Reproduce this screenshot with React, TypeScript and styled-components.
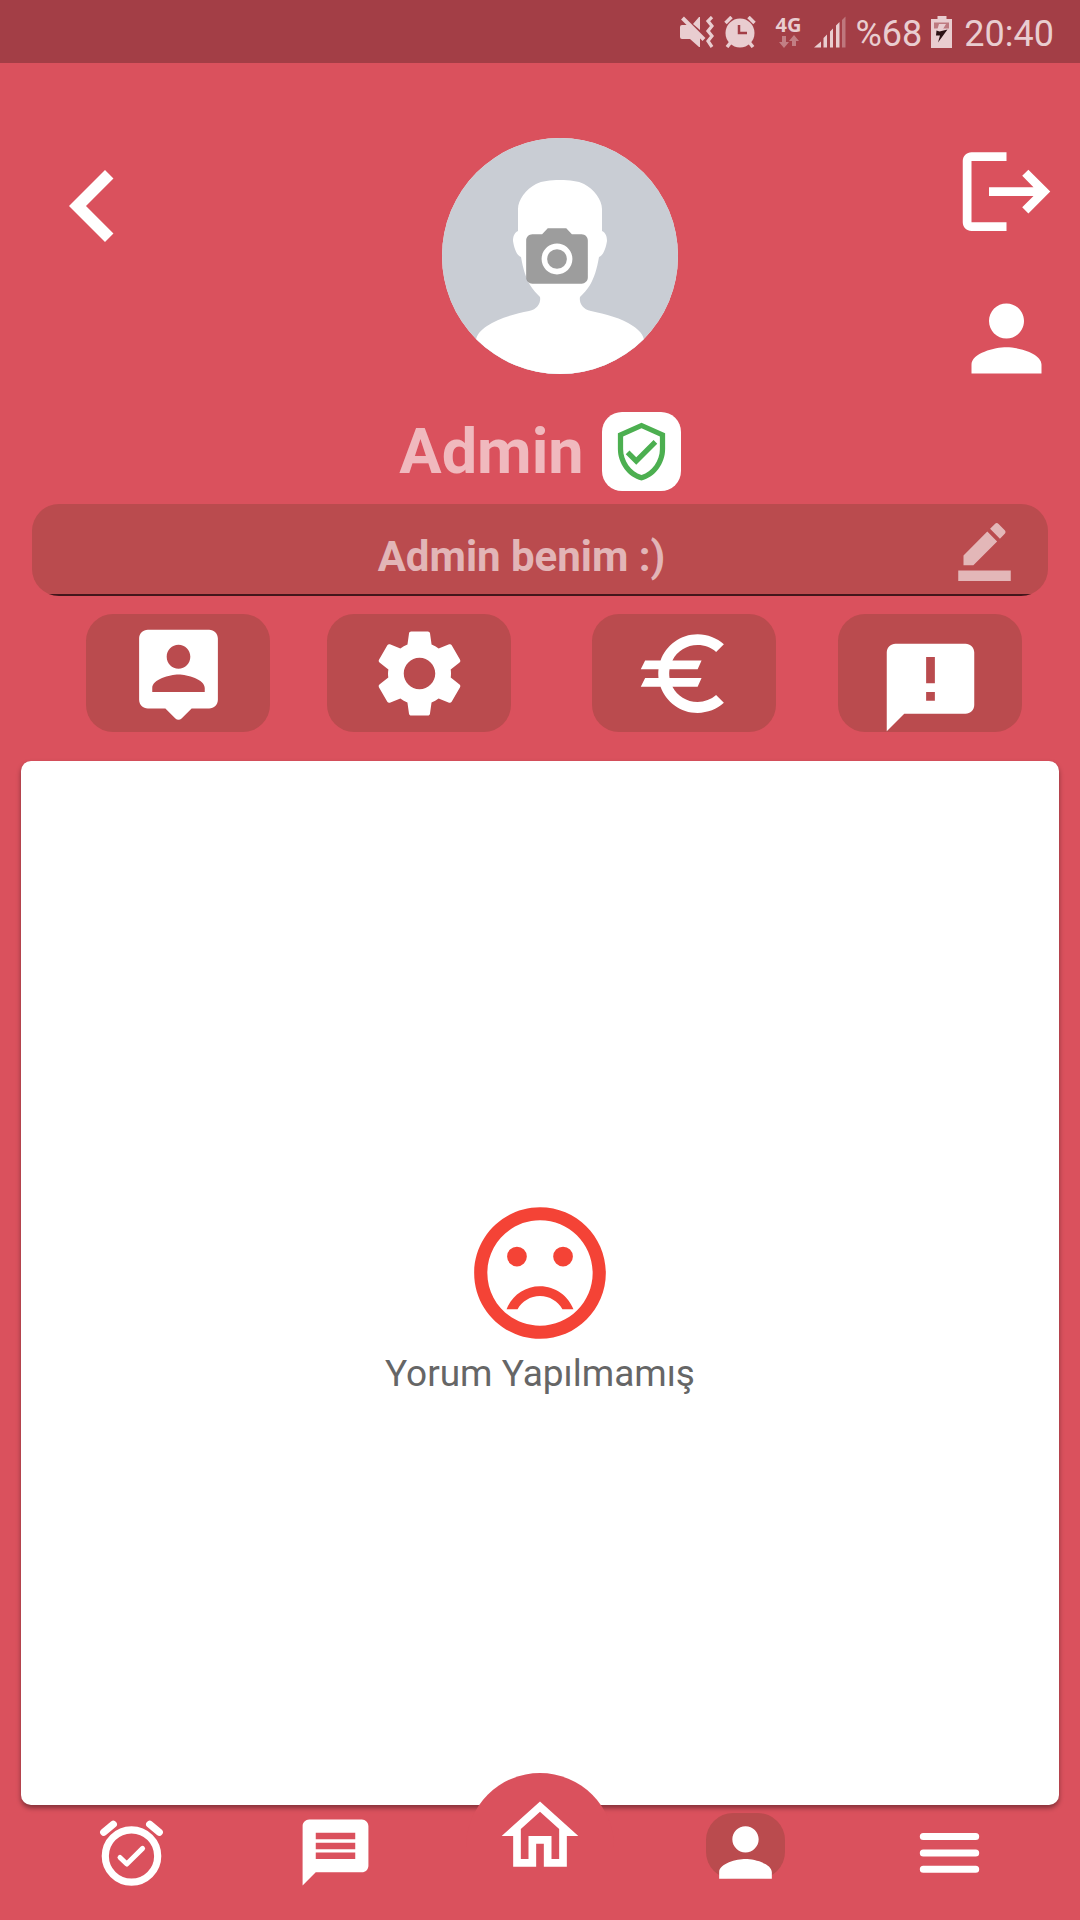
import React from 'react';
import styled, { createGlobalStyle } from 'styled-components';
import {
  MdBorderColor,
  MdCameraAlt,
  MdChevronLeft,
  MdLogout,
  MdMessage,
  MdOutlineHome,
  MdOutlineVerifiedUser,
  MdPerson,
  MdSettings,
} from 'react-icons/md';

const color = {
  page: '#da515d',
  status: '#a33e46',
  statusInk: '#e9cdd0',
  panel: '#ba4b4e',
  line: '#43161b',
  soft: 'rgba(255, 255, 255, 0.6)',
};

const GlobalStyle = createGlobalStyle`
  * { box-sizing: border-box; }
  body {
    margin: 0;
    background: ${color.page};
    font-family: Roboto, "Liberation Sans", sans-serif;
  }
  svg { display: block; flex: none; }
`;

const Screen = styled.div`
  display: flex;
  flex-direction: column;
  min-height: 100vh;
  background: ${color.page};
`;

const StatusBar = styled.div`
  display: flex;
  align-items: center;
  justify-content: flex-end;
  height: 63px;
  padding-right: 26px;
  background: ${color.status};
  color: ${color.statusInk};
`;

const StatusItem = styled.span<{ $gap: number }>`
  margin-left: ${(p) => p.$gap}px;
`;

const StatusText = styled(StatusItem)`
  padding-top: 4px;
  font-size: 36px;
`;

const Network = styled.span`
  display: flex;
  flex-direction: column;
  align-items: center;
  margin-left: 20px;
  font: 700 20px/20px "Open Sans", sans-serif;
`;

const IconButton = styled.button`
  display: flex;
  padding: 0;
  border: 0;
  background: none;
  color: #fff;
  cursor: pointer;
`;

const Header = styled.header`
  display: grid;
  grid-template-columns: 1fr 236px 1fr;
  padding: 71px 21px 0;
  height: 342px;
`;

const HeaderActions = styled.div`
  display: flex;
  flex-direction: column;
  align-items: flex-end;
  gap: 42px;
  padding-top: 5px;
`;

const Avatar = styled.button`
  position: relative;
  width: 236px;
  height: 236px;
  margin: 4px 0 0 20px;
  padding: 0;
  border: 0;
  border-radius: 50%;
  overflow: hidden;
  cursor: pointer;
`;

const CameraBadge = styled.span`
  position: absolute;
  left: 78px;
  top: 84px;
  color: rgba(140, 140, 140, 0.85);
`;

const NameRow = styled.div`
  display: flex;
  align-items: center;
  justify-content: center;
  gap: 18px;
  margin-top: 7px;
`;

const Name = styled.h1`
  margin: 0;
  color: ${color.soft};
  font-size: 63px;
  line-height: 79px;
  font-weight: 700;
`;

const Verified = styled.span`
  display: flex;
  padding: 8px;
  border-radius: 20px;
  background: #fff;
  color: #4caf50;
`;

const Bio = styled.div`
  display: flex;
  align-items: center;
  height: 92px;
  margin: 13px 32px 0;
  padding: 0 32px;
  border-radius: 27px;
  overflow: hidden;
  background: linear-gradient(${color.line}, ${color.line}) bottom / 100% 2px no-repeat ${color.panel};
`;

const BioInput = styled.input`
  flex: 1;
  min-width: 0;
  height: 80px;
  padding: 12px 0 0 26px;
  border: 0;
  outline: 0;
  background: none;
  color: ${color.soft};
  font: 700 42px Roboto, sans-serif;
  text-align: center;
`;

const EditButton = styled(IconButton)`
  padding-bottom: 2px;
  color: ${color.soft};
`;

const Shortcuts = styled.div`
  display: grid;
  grid-template-columns: 241fr 265fr 246fr 184fr;
  margin: 18px 58px 0 86px;
`;

const Shortcut = styled.button<{ $drop?: boolean }>`
  display: flex;
  align-items: center;
  justify-content: center;
  width: 184px;
  height: 118px;
  padding: ${(p) => (p.$drop ? '28px 0 0' : '0')};
  border: 0;
  border-radius: 27px;
  background: ${color.panel};
  color: #fff;
  cursor: pointer;
`;

const Comments = styled.main`
  display: flex;
  flex: 1;
  flex-direction: column;
  align-items: center;
  justify-content: center;
  margin: 29px 21px 0;
  padding-top: 23px;
  border-radius: 10px;
  background: #fff;
  box-shadow: 0 3px 5px rgba(0, 0, 0, 0.4);
  color: #f44336;
`;

const EmptyText = styled.p`
  margin: 0;
  color: #666;
  font-size: 37px;
  line-height: 44px;
`;

const Nav = styled.nav`
  display: flex;
  align-items: flex-start;
  height: 115px;
  padding: 8px 28px 0 29px;
`;

const NavItem = styled.a`
  display: flex;
  flex: 1;
  justify-content: center;
  color: #fff;
`;

const HomeDisc = styled.span`
  position: relative;
  display: flex;
  justify-content: center;
  flex: none;
  width: 148px;
  height: 142px;
  margin-top: -40px;
  padding-top: 17px;
  border-radius: 74px 74px 0 0;
  background: ${color.page};
`;

const ActiveTab = styled.span`
  display: flex;
  height: 66px;
  border-radius: 27px;
  background: ${color.panel};
`;

const MuteIcon = () => (
  <svg width="34" height="32" viewBox="0 0 34 32" fill="currentColor" aria-hidden="true">
    <path d="M0 11q0-2 2-2h6l12 12v10h-1l-9-8H2q-2 0-2-2zM13 8l6-7h1v13z" />
    <path d="M2.500 2l21.500 21.500" stroke="currentColor" strokeWidth="4" />
    <path d="M32 1l-4 4 4 5-4 5 4 5-4 5 4 6" fill="none" stroke="currentColor" strokeWidth="3.200" />
  </svg>
);

const AlarmIcon = () => (
  <svg width="32" height="32" viewBox="0 0 32 32" fill="none" stroke="currentColor" aria-hidden="true">
    <circle cx="16" cy="17" r="14.500" fill="currentColor" stroke="none" />
    <path d="M1.500 7l6-6M30.500 7l-6-6M7 26l-4 5M25 26l4 5" strokeWidth="3.500" />
    <path d="M15 9v8h8" stroke={color.status} strokeWidth="2.500" />
  </svg>
);

const DataArrows = () => (
  <svg width="20" height="13" viewBox="0 0 20 13" fill="currentColor" opacity="0.45" aria-hidden="true">
    <path d="M3 1h4v6h3l-5 6-5-6h3zM13 11V6h-3l5-6 5 6h-3v5z" />
  </svg>
);

const SignalIcon = () => (
  <svg width="32" height="32" viewBox="0 0 32 32" fill="currentColor" aria-hidden="true">
    <path d="M0 31.500l7-6v6zM9.500 22l3.500-3.500v13H9.500zM16 15.500l3-3v19h-3zM22 9.500l3.500-3.500v25.500H22z" />
    <path d="M28 4l3.500-3.500v31H28z" opacity="0.4" />
  </svg>
);

const BatteryIcon = () => (
  <svg width="22" height="32" viewBox="0 0 22 32" aria-hidden="true">
    <path d="M6.500 0h9v3H21v29H0V3h6.500z" fill="currentColor" />
    <path d="M3 6.500h15v6H3z" fill="#be7a80" />
    <path d="M8 8h7l-3 5h5L6.500 26l2-8H5z" fill={color.statusInk} />
    <path d="M5.500 14.500l3 1 8-2-9.500 13 2-7H5z" fill="#2c1215" />
  </svg>
);

const Silhouette = () => (
  <svg width="236" height="236" viewBox="0 0 236 236" aria-hidden="true">
    <rect width="236" height="236" fill="#c9cdd4" />
    <path
      d="M118 42c-10 0-18 1-24 4-10 5-18 16-18 25v22c-4 2-5 6-5 10 1 6 3 14 8 16 2 12 5 21 9 28 3 5 7 9 10 12 1 5-2 12-11 14-14 3-31 7-42 15-6 4-11 9-11 15v45h168v-45c0-6-5-11-11-15-11-8-28-12-42-15-9-2-12-9-11-14 3-3 7-7 10-12 4-7 7-16 9-28 5-2 7-10 8-16 0-4-1-8-5-10V71c0-9-8-20-18-25-6-3-14-4-24-4z"
      fill="#fff"
    />
  </svg>
);

const MaterialSvg = ({ size, d }: { size: number; d: string }) => (
  <svg width={size} height={size} viewBox="0 0 24 24" fill="currentColor" aria-hidden="true">
    <path d={d} />
  </svg>
);

const personPin =
  'M19 2H5c-1.110 0-2 .9-2 2v14c0 1.100.890 2 2 2h4l2.290 2.290c.39.39 1.020.39 1.410 0L15 20h4c1.100 0 2-.9 2-2V4c0-1.100-.9-2-2-2zm-7 3.400c1.490 0 2.700 1.210 2.700 2.750S13.490 10.900 12 10.900 9.300 9.690 9.300 8.150 10.510 5.400 12 5.400zM18 16.200H6v-.9c0-2 4-3.100 6-3.100s6 1.100 6 3.100v.9z';
const euro =
  'M15 18.500c-2.510 0-4.680-1.420-5.760-3.500H15l.9-2H8.580c-.05-.33-.08-.66-.08-1s.03-.67.08-1H15l.9-2H9.240C10.320 6.920 12.500 5.500 15 5.500c1.610 0 3.090.59 4.230 1.570L21 5.300C19.410 3.870 17.300 3 15 3c-3.920 0-7.240 2.510-8.480 6H3l-1 2h4.060c-.04.33-.06.66-.06 1s.02.67.06 1H3l-1 2h4.520c1.240 3.490 4.560 6 8.480 6 2.310 0 4.410-.87 6-2.300l-1.780-1.770c-1.130.98-2.600 1.570-4.220 1.570z';
const feedback =
  'M20 2H4c-1.100 0-2 .9-2 2v18l4-4h14c1.100 0 2-.9 2-2V4c0-1.100-.9-2-2-2zm-7 9h-2V5h2v6zm0 4h-2v-2h2v2z';
const sadFace =
  'M12 2C6.480 2 2 6.480 2 12s4.480 10 10 10 10-4.480 10-10S17.520 2 12 2zm0 18c-4.420 0-8-3.580-8-8s3.580-8 8-8 8 3.580 8 8-3.580 8-8 8zM7 9.500a1.500 1.500 0 1 0 3 0a1.500 1.500 0 1 0-3 0zM14 9.500a1.500 1.500 0 1 0 3 0a1.500 1.500 0 1 0-3 0zM12 14c-2.330 0-4.290 1.450-5.080 3.500h1.670c.69-1.190 1.940-2 3.410-2s2.710.81 3.410 2h1.670c-.79-2.050-2.750-3.500-5.080-3.500z';

const AlarmCheckIcon = () => (
  <svg width="79" height="79" viewBox="0 0 79 79" fill="none" stroke="currentColor" strokeLinecap="round" strokeLinejoin="round" aria-hidden="true">
    <circle cx="39.500" cy="43" r="26.200" strokeWidth="7.200" />
    <path d="M11.700 19.200l9.600-8M67.300 19.200l-9.600-8" strokeWidth="7.200" />
    <path d="M28 44.500l6.800 6.500 15.800-15.600" strokeWidth="5" />
  </svg>
);

const MenuIcon = () => (
  <svg width="79" height="79" viewBox="0 0 79 79" fill="none" stroke="currentColor" strokeLinecap="round" strokeWidth="7" aria-hidden="true">
    <path d="M13.300 23.500h52.400M13.300 40h52.400M13.300 56.200h52.400" />
  </svg>
);

export default function App() {
  return (
    <>
      <GlobalStyle />
      <Screen>
        <StatusBar>
          <MuteIcon />
          <StatusItem $gap={10}><AlarmIcon /></StatusItem>
          <Network>
            4G
            <DataArrows />
          </Network>
          <StatusItem $gap={12}><SignalIcon /></StatusItem>
          <StatusText $gap={10}>%68</StatusText>
          <StatusItem $gap={9}><BatteryIcon /></StatusItem>
          <StatusText $gap={11}>20:40</StatusText>
        </StatusBar>

        <Header>
          <div>
            <IconButton aria-label="Geri"><MdChevronLeft size={144} /></IconButton>
          </div>
          <Avatar aria-label="Profil fotoğrafı">
            <Silhouette />
            <CameraBadge><MdCameraAlt size={74} /></CameraBadge>
          </Avatar>
          <HeaderActions>
            <IconButton aria-label="Çıkış"><MdLogout size={105} /></IconButton>
            <IconButton aria-label="Profil"><MdPerson size={105} /></IconButton>
          </HeaderActions>
        </Header>

        <NameRow>
          <Name>Admin</Name>
          <Verified><MdOutlineVerifiedUser size={63} /></Verified>
        </NameRow>

        <Bio>
          <BioInput aria-label="Durum" defaultValue="Admin benim :)" />
          <EditButton aria-label="Düzenle"><MdBorderColor size={63} /></EditButton>
        </Bio>

        <Shortcuts>
          <Shortcut aria-label="Kişi"><MaterialSvg size={105} d={personPin} /></Shortcut>
          <Shortcut aria-label="Ayarlar"><MdSettings size={105} /></Shortcut>
          <Shortcut aria-label="Ödeme"><MaterialSvg size={105} d={euro} /></Shortcut>
          <Shortcut aria-label="Geri bildirim" $drop><MaterialSvg size={105} d={feedback} /></Shortcut>
        </Shortcuts>

        <Comments>
          <MaterialSvg size={158} d={sadFace} />
          <EmptyText>Yorum Yapılmamış</EmptyText>
        </Comments>

        <Nav>
          <NavItem href="#alarm" aria-label="Alarm"><AlarmCheckIcon /></NavItem>
          <NavItem href="#mesajlar" aria-label="Mesajlar"><MdMessage size={79} /></NavItem>
          <NavItem href="#ana-sayfa" aria-label="Ana sayfa">
            <HomeDisc><MdOutlineHome size={92} /></HomeDisc>
          </NavItem>
          <NavItem href="#profil" aria-label="Profil">
            <ActiveTab><MdPerson size={79} /></ActiveTab>
          </NavItem>
          <NavItem href="#menu" aria-label="Menü"><MenuIcon /></NavItem>
        </Nav>
      </Screen>
    </>
  );
}
